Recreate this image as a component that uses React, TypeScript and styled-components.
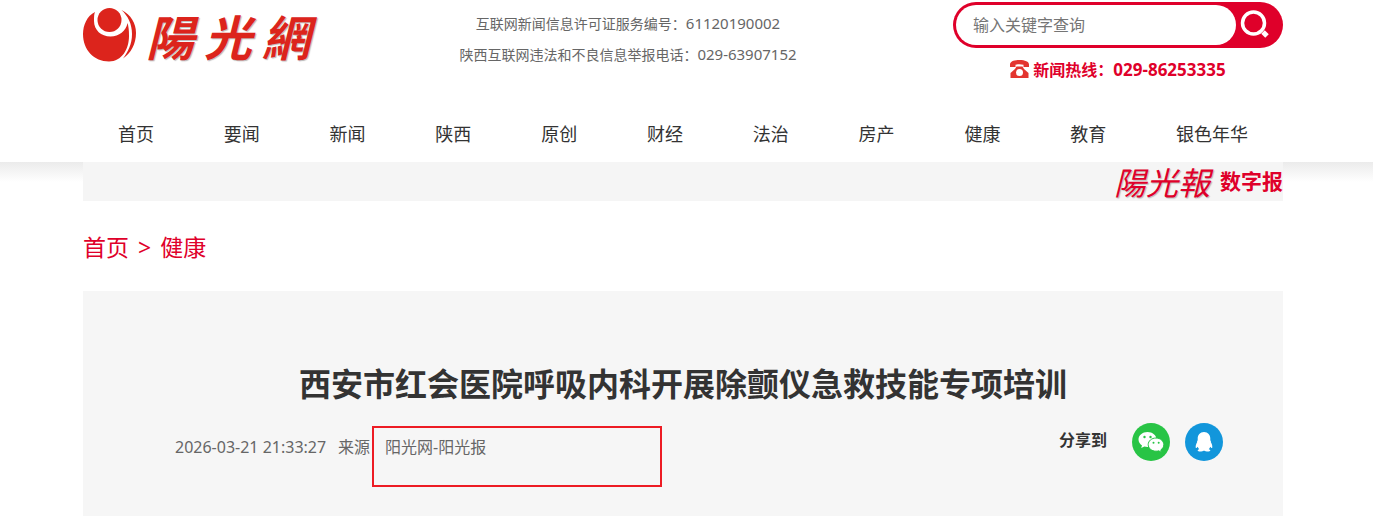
import React from "react";
import styled, { createGlobalStyle } from "styled-components";

const RED = "#df002a";

const GlobalStyle = createGlobalStyle`
  * { box-sizing: border-box; }
  body {
    margin: 0;
    background: #fff;
    color: #333;
    font-family: "Noto Sans", "Noto Sans CJK SC", sans-serif;
    font-size: 16px;
  }
  a { color: inherit; text-decoration: none; }
  h1, p, ul, ol { margin: 0; padding: 0; }
  ul, ol { list-style: none; }
`;

const Gutter = styled.div`
  padding-right: 7px;
`;

const Container = styled.div`
  width: 100%;
  max-width: 1200px;
  margin: 0 auto;
`;

const HeaderTop = styled.header`
  display: grid;
  grid-template-columns: 300px 1fr 330px;
  min-height: 106px;
`;

const Logo = styled.a`
  display: flex;
  align-items: center;
  align-self: start;
  gap: 9px;
  height: 70px;
  color: #dc241c;
`;

const LogoText = styled.span`
  display: flex;
  gap: 10px;
  font-family: "Noto Sans CJK TC", sans-serif;
  font-size: 48px;
  font-style: italic;
  font-weight: 700;
  line-height: 70px;
  text-shadow: 1px 1px 1px #bbb;
`;

const Notices = styled.div`
  padding: 8px 80px 0 0;
  color: #666;
  font-size: 14px;
  line-height: 31px;
  text-align: center;
  white-space: nowrap;
`;

const Digits = styled.span<{ $size: number }>`
  font-size: ${(p) => p.$size}px;
`;

const Tools = styled.div`
  padding-top: 2px;
`;

const Search = styled.form`
  display: flex;
  height: 46px;
  padding: 3px 0 3px 3px;
  border-radius: 23px;
  background: ${RED};
`;

const SearchInput = styled.input`
  flex: 1;
  min-width: 0;
  padding: 0 17px;
  border: 0;
  border-radius: 20px;
  outline: 0;
  background: #fff;
  font: inherit;
  &::placeholder { color: #757575; opacity: 1; }
`;

const SearchButton = styled.button`
  width: 47px;
  padding: 0 0 0 4px;
  border: 0;
  background: transparent;
  text-align: left;
  cursor: pointer;
  svg { display: block; }
`;

const Hotline = styled.p`
  display: flex;
  align-items: center;
  justify-content: center;
  gap: 4px;
  height: 42px;
  color: ${RED};
  font-weight: 700;
`;

const NavList = styled.ul`
  display: flex;
  li { flex: 1 1 auto; }
  a {
    display: block;
    font-size: 18px;
    line-height: 56px;
    text-align: center;
    white-space: nowrap;
  }
`;

const Shade = styled(Gutter)`
  background: linear-gradient(#ebebeb, #fff) top / 100% 20px no-repeat;
`;

const PaperBar = styled(Container)`
  display: flex;
  align-items: center;
  justify-content: flex-end;
  height: 39px;
  background: #f5f5f5;
`;

const PaperLink = styled.a`
  display: flex;
  align-items: center;
  gap: 10px;
  color: ${RED};
  font-size: 21px;
  font-weight: 700;
  line-height: 39px;
`;

const PaperName = styled.span`
  font-family: "Noto Sans CJK TC", sans-serif;
  font-size: 32px;
  font-style: italic;
  font-weight: 400;
  text-shadow: 1px 1px 1px #bbb;
`;

const Breadcrumb = styled.ol`
  display: flex;
  gap: 9px;
  height: 90px;
  color: ${RED};
  font-size: 23px;
  line-height: 92px;
`;

const Article = styled.article`
  padding: 69px 60px 29px 92px;
  background: #f6f6f6;
`;

const Title = styled.h1`
  margin-right: 32px;
  font-size: 32px;
  line-height: 48px;
  text-align: center;
`;

const Meta = styled.div`
  display: flex;
  align-items: flex-start;
  margin-top: 15px;
  color: #666;
  line-height: 48px;
  white-space: nowrap;
`;

const Published = styled.div`
  display: flex;
  justify-content: space-between;
  width: 197px;
  padding-right: 2px;
`;

const Source = styled.div`
  width: 290px;
  height: 61px;
  margin-top: 3px;
  padding-left: 11px;
  border: 2px solid #ed1c24;
  line-height: 38px;
`;

const Share = styled.div`
  display: flex;
  gap: 15px;
  margin-left: auto;
  color: #333;
`;

const ShareLabel = styled.span`
  margin-right: 10px;
  font-weight: 700;
  line-height: 34px;
`;

const ShareButton = styled.button<{ $color: string }>`
  width: 38px;
  height: 38px;
  padding: 0;
  border: 0;
  border-radius: 50%;
  background: ${(p) => p.$color};
  cursor: pointer;
  svg { display: block; }
`;

const NAV = ["首页", "要闻", "新闻", "陕西", "原创", "财经", "法治", "房产", "健康", "教育", "银色年华"];

const SunMark = () => (
  <svg width="54" height="56" viewBox="0 0 54 56" aria-hidden="true">
    <path
      fill="currentColor"
      d="M12 5C4 9 0 18 0 27c0 16 11 27.500 26 27.500 13 0 20-12.500 20-25.500 0-6-.5-10-1.500-13-1.500 8-8.500 13.500-17 13.500C18 29.500 11 23 11 14c0-4 0-7 1-9Z"
    />
    <circle cx="26.500" cy="13" r="12" fill="currentColor" />
    <path
      fill="currentColor"
      d="M38.500 3C48 8 53 16 53 26c0 11-5 20-13 25.500 5-6.500 9-14.500 9-24.500S45 9 38.500 3Z"
    />
  </svg>
);

const SearchIcon = () => (
  <svg width="30" height="30" viewBox="0 0 30 30" fill="none" stroke="#fff" aria-hidden="true">
    <circle cx="13.500" cy="13" r="11" strokeWidth="3.500" />
    <path d="m23 22 4 4" strokeWidth="5" />
  </svg>
);

const PhoneIcon = () => (
  <svg width="19" height="18" viewBox="0 0 19 18" aria-hidden="true">
    <path
      fill="#e3352f"
      d="M0 7V4.500C0 1.500 4 0 9.500 0S19 1.500 19 4.500V7h-5.500V4.800c-2.500-.8-5.500-.8-8 0V7H0Z"
    />
    <path fill="#e3352f" fillRule="evenodd" d="M6.500 6.500h6L14 9l4.500 4v5H.5v-5L5 9l1.500-2.500ZM9.500 9a3.500 3.500 0 1 0 0 7 3.500 3.500 0 0 0 0-7Z" />
  </svg>
);

const WechatIcon = () => (
  <svg width="38" height="38" viewBox="0 0 38 38" aria-hidden="true">
    <path fill="#fff" d="M15.500 9C10.500 9 6.500 12.200 6.500 16.500c0 2.500 1.300 4.500 3.500 5.900L9.200 25l3.200-1.500c1 .3 2 .4 3.100.4 5 0 9-3.200 9-7.400S20.500 9 15.500 9Z" />
    <circle cx="12.500" cy="14" r="1.200" fill="#28c445" />
    <circle cx="18.500" cy="14" r="1.200" fill="#28c445" />
    <path
      fill="#fff"
      stroke="#28c445"
      d="M24 15c-4.300 0-7.800 2.900-7.800 6.600S19.700 28.200 24 28.200c1 0 1.900-.1 2.700-.4l2.800 1.500-.7-2.400c1.900-1.200 3-3.100 3-5.300 0-3.700-3.500-6.600-7.800-6.600Z"
    />
    <circle cx="21.500" cy="19.800" r="1" fill="#28c445" />
    <circle cx="26.700" cy="19.800" r="1" fill="#28c445" />
  </svg>
);

const QQIcon = () => (
  <svg width="38" height="38" viewBox="0 0 38 38" aria-hidden="true">
    <path
      fill="#fff"
      d="M19 9c-4 0-6.300 3-6.300 6.500v1.700c-.6.700-.8 1.400-.6 2.100-1.200 2-1.700 3.900-1.300 5.700.4.400 1.200-.3 1.900-1.300.3 1 .8 1.800 1.500 2.500-1.200.4-1.700 1-1.500 1.600.5 1.200 4.800 1 6.300-.2 1.500 1.200 5.800 1.400 6.300.2.200-.6-.3-1.200-1.500-1.600.7-.7 1.200-1.500 1.500-2.500.7 1 1.500 1.700 1.900 1.300.4-1.800-.1-3.700-1.300-5.700.2-.7 0-1.400-.6-2.100v-1.700C25.300 12 23 9 19 9Z"
    />
  </svg>
);

export default function App() {
  return (
    <>
      <GlobalStyle />
      <Gutter>
        <Container>
          <HeaderTop>
            <Logo href="#">
              <SunMark />
              <LogoText>
                <span>陽</span>
                <span>光</span>
                <span>網</span>
              </LogoText>
            </Logo>
            <Notices>
              <p>
                互联网新闻信息许可证服务编号：<Digits $size={15}>61120190002</Digits>
              </p>
              <p>
                陕西互联网违法和不良信息举报电话：<Digits $size={15}>029-63907152</Digits>
              </p>
            </Notices>
            <Tools>
              <Search onSubmit={(e) => e.preventDefault()}>
                <SearchInput type="text" aria-label="输入关键字查询" placeholder="输入关键字查询" />
                <SearchButton type="submit" aria-label="查询">
                  <SearchIcon />
                </SearchButton>
              </Search>
              <Hotline>
                <PhoneIcon />
                <span>
                  新闻热线：<Digits $size={17}>029-86253335</Digits>
                </span>
              </Hotline>
            </Tools>
          </HeaderTop>
          <nav>
            <NavList>
              {NAV.map((name) => (
                <li key={name}>
                  <a href="#">{name}</a>
                </li>
              ))}
            </NavList>
          </nav>
        </Container>
      </Gutter>
      <Shade>
        <PaperBar>
          <PaperLink href="#">
            <PaperName>陽光報</PaperName>
            <span>数字报</span>
          </PaperLink>
        </PaperBar>
      </Shade>
      <Gutter>
        <Container as="main">
          <Breadcrumb>
            <li>
              <a href="#">首页</a>
            </li>
            <li aria-hidden="true">&gt;</li>
            <li>
              <a href="#">健康</a>
            </li>
          </Breadcrumb>
          <Article>
            <Title>西安市红会医院呼吸内科开展除颤仪急救技能专项培训</Title>
            <Meta>
              <Published>
                <time>2026-03-21 21:33:27</time>
                <span>来源</span>
              </Published>
              <Source>阳光网-阳光报</Source>
              <Share>
                <ShareLabel>分享到</ShareLabel>
                <ShareButton type="button" $color="#28c445" aria-label="微信">
                  <WechatIcon />
                </ShareButton>
                <ShareButton type="button" $color="#1296db" aria-label="QQ">
                  <QQIcon />
                </ShareButton>
              </Share>
            </Meta>
          </Article>
        </Container>
      </Gutter>
    </>
  );
}
